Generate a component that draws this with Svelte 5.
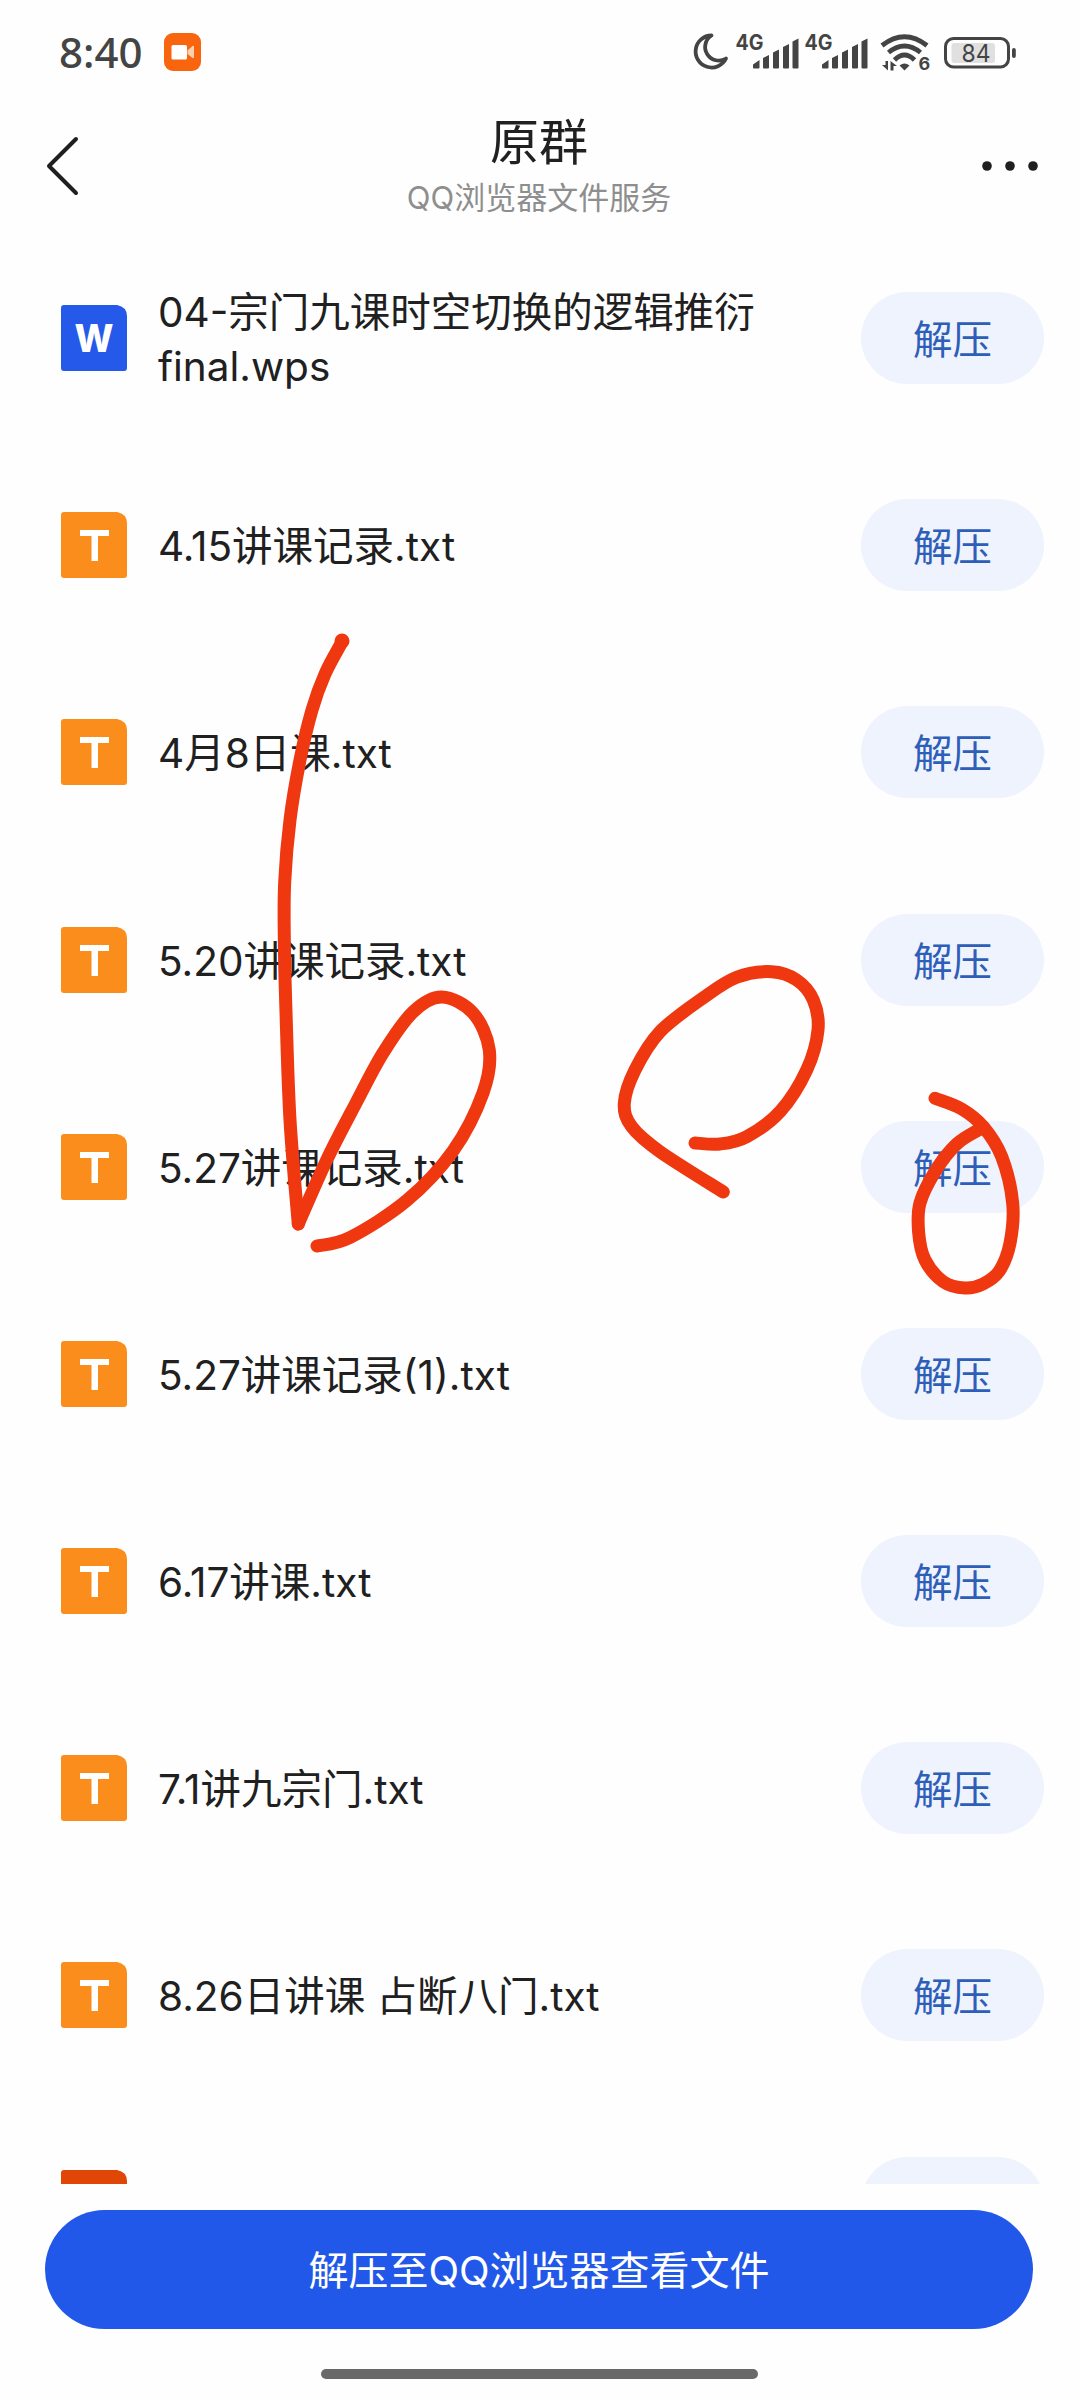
<script>
	const files = [
		{ name: '04-宗门九课时空切换的逻辑推衍final.wps', type: 'wps' },
		{ name: '4.15讲课记录.txt', type: 'txt' },
		{ name: '4月8日课.txt', type: 'txt' },
		{ name: '5.20讲课记录.txt', type: 'txt' },
		{ name: '5.27讲课记录.txt', type: 'txt' },
		{ name: '5.27讲课记录(1).txt', type: 'txt' },
		{ name: '6.17讲课.txt', type: 'txt' },
		{ name: '7.1讲九宗门.txt', type: 'txt' },
		{ name: '8.26日讲课 占断八门.txt', type: 'txt' },
		{ name: '', type: 'ppt' }
	];

	const colors = { wps: '#2459e9', txt: '#fa8d1c', ppt: '#e04605' };

	// Pen strokes drawn over the page, as lists of points
	const strokes = [
		[[342, 642], [325, 674], [312, 710], [300, 760], [290, 820], [284.7, 882], [284.3, 938], [286, 1012], [290, 1120], [298.3, 1224]],
		[[298.3, 1224], [326.7, 1160], [356, 1103], [383, 1053], [413, 1012], [441.7, 997], [473, 1013], [489.3, 1050], [483, 1093], [453, 1151], [406.7, 1200.6], [350, 1237.5], [317, 1246]],
		[[695, 1143], [720, 1144], [746.7, 1136.7], [780, 1111.7], [806.7, 1070], [818, 1030], [813.3, 1000], [796.7, 980], [771.7, 971.7], [736.7, 977.3], [703, 998], [660, 1031.7], [635, 1070], [624.3, 1103.3], [631.7, 1126.7], [660, 1151.7], [723.3, 1192]],
		[[935, 1098.3], [961.7, 1109], [983.3, 1126.7], [1001.7, 1156.7], [1012.7, 1203.3], [1010, 1243.3], [999.3, 1271], [983, 1284], [965, 1288], [943.3, 1281.7], [925, 1260], [918.7, 1233], [920, 1203], [936, 1170], [956.7, 1144], [978.3, 1130]]
	];

	function smooth(p) {
		let d = `M${p[0]}`;
		for (let i = 0; i < p.length - 1; i++) {
			const a = p[i - 1] || p[i];
			const b = p[i];
			const c = p[i + 1];
			const e = p[i + 2] || c;
			d += `C${b[0] + (c[0] - a[0]) / 6},${b[1] + (c[1] - a[1]) / 6} ${c[0] - (e[0] - b[0]) / 6},${c[1] - (e[1] - b[1]) / 6} ${c}`;
		}
		return d;
	}
</script>

<div class="page">
	<div class="status">
		<span class="time">8:40</span>
		<svg class="rec" width="37" height="38" viewBox="0 0 37 38">
			<rect width="37" height="38" rx="9" fill="#f9650f" />
			<rect x="7.5" y="12" width="15.5" height="14.5" rx="1.5" fill="#fff" />
			<path d="M23.5 17.5 28.5 13q1.5-.6 1.5 1v10q0 1.6-1.5 1L23.5 21z" fill="#ffd0ae" />
		</svg>

		<svg class="system" width="330" height="50" viewBox="0 -4 330 50" fill="#444">
			<path d="M19.5 4.5A16 16 0 1 0 34 27.500A13.5 13.5 0 0 1 19.5 4.5Z" fill="none" stroke="#444" stroke-width="3.8" stroke-linejoin="round" />
			{#each [0, 69] as x}
				<g transform="translate({x} 0)">
					<text x="43.5" y="19" font-size="21" font-weight="700" textLength="28" lengthAdjust="spacingAndGlyphs">4G</text>
					<path d="M61 33.5 67.5 29v7.5q0 1-1 1H62q-1 0-1-1z" />
					<path d="M71 27 77 24v12.5q0 1-1 1h-4q-1 0-1-1z" />
					<path d="M81 21.5 87 18.5v18q0 1-1 1h-4q-1 0-1-1z" />
					<path d="M91 16 97 13v23.5q0 1-1 1h-4q-1 0-1-1z" />
					<path d="M100.5 10.5 106.5 7.5v29q0 1-1 1h-4q-1 0-1-1z" />
				</g>
			{/each}
			<g fill="none" stroke="#444" stroke-width="4.8">
				<path d="M190 14.500Q212.5-3 235 14.500" />
				<path d="M196.5 21.500Q212.5 8.500 228.5 21.500" />
				<path d="M202.5 29Q212.5 19 222.5 29" />
			</g>
			<path d="M207.5 34.500q5-4 10 0l-5 5z" />
			<path d="M190 34h3.500v-4h2.500V39.500zM198.500 39.500V30l6.500 5h-3.500v4.500z" />
			<text x="226.5" y="38.500" font-size="18" font-weight="700">6</text>
			<rect x="253.5" y="7.5" width="63" height="28.5" rx="8" fill="none" stroke="#444" stroke-width="3" />
			<rect x="259.5" y="12" width="43.5" height="20" rx="3" fill="#e0e0e0" />
			<text x="269.5" y="30.5" font-size="24" textLength="29" lengthAdjust="spacingAndGlyphs">84</text>
			<rect x="320" y="17" width="3.8" height="10" rx="1.9" />
		</svg>
	</div>

	<div class="header">
		<svg class="back" width="34" height="60" viewBox="0 0 34 60">
			<path d="M31 3 4 30 31 57" fill="none" stroke="#1f1f1f" stroke-width="4" stroke-linecap="round" stroke-linejoin="round" />
		</svg>
		<div class="titles">
			<div class="title">原群</div>
			<div class="subtitle">QQ浏览器文件服务</div>
		</div>
		<svg class="more" width="56" height="12" viewBox="0 0 56 12" fill="#1f1f1f">
			<circle cx="5" cy="6" r="4.8" />
			<circle cx="28" cy="6" r="4.8" />
			<circle cx="51" cy="6" r="4.8" />
		</svg>
	</div>

	<div class="list">
		{#each files as file}
			<div class="row">
				<svg class="file-icon" width="66" height="66" viewBox="0 0 66 66">
					<path d="M3 0H56Q66 2 66 11V63Q66 66 63 66H3Q0 66 0 63V3Q0 0 3 0Z" fill={colors[file.type]} />
					{#if file.type === 'wps'}
						<text x="33" y="46.5" text-anchor="middle" font-size="38" font-weight="800" fill="#fff" textLength="39" lengthAdjust="spacingAndGlyphs">W</text>
					{:else if file.type === 'txt'}
						<path d="M19 18H48V24H37V49H30.500V24H19Z" fill="#fff" />
					{/if}
				</svg>
				<div class="name">{file.name}</div>
				<button class="extract">{file.name ? '解压' : ''}</button>
			</div>
		{/each}
	</div>

	<div class="footer">
		<button class="extract-all">解压至QQ浏览器查看文件</button>
		<div class="home"></div>
	</div>

	<svg class="ink" width="1080" height="2401" viewBox="0 0 1080 2401">
		{#each strokes as stroke}
			<path d={smooth(stroke)} />
		{/each}
		<circle cx="342" cy="641" r="7.5" />
	</svg>
</div>

<style>
	:global(body) {
		background: #fefefe;
	}
	.page {
		position: relative;
		width: 1080px;
		height: 2401px;
		overflow: hidden;
		display: flex;
		flex-direction: column;
		background: #fefefe;
		color: #202020;
		font-family: Inter, 'Noto Sans CJK SC', sans-serif;
	}
	button {
		border: none;
		padding: 0;
		font-family: inherit;
	}
	.status {
		display: flex;
		align-items: center;
		height: 104px;
		padding: 0 59px;
		box-sizing: border-box;
	}
	.time {
		width: 105px;
		padding-bottom: 2px;
		font-family: 'Noto Sans', sans-serif;
		font-size: 42px;
		font-weight: 500;
		color: #444;
	}
	.system {
		margin-left: auto;
		margin-right: -1px;
	}
	.header {
		display: flex;
		align-items: center;
		justify-content: space-between;
		height: 124px;
		padding: 0 42px 0 45px;
		margin-bottom: 6.4px;
	}
	.titles {
		text-align: center;
		padding-left: 17px;
	}
	.title {
		font-size: 49px;
		line-height: 64px;
	}
	.subtitle {
		font-size: 31px;
		line-height: 46px;
		color: #8e8e8e;
	}
	.list {
		height: 1950px;
		overflow: hidden;
	}
	.row {
		display: flex;
		align-items: center;
		height: 207.2px;
		padding: 0 36px 0 61px;
	}
	.file-icon {
		flex: none;
	}
	.name {
		width: 610px;
		margin-left: 31px;
		padding-top: 4px;
		font-size: 40.5px;
		line-height: 54px;
	}
	.extract {
		width: 183px;
		height: 92px;
		margin-left: auto;
		padding-bottom: 3px;
		border-radius: 46px;
		background: #eff3fe;
		color: #2e5fb8;
		font-size: 39.5px;
	}
	.footer {
		display: flex;
		flex-direction: column;
		align-items: center;
		padding: 25.6px 2px 0 0;
	}
	.extract-all {
		width: 988px;
		height: 119px;
		padding-bottom: 3px;
		border-radius: 60px;
		background: #2258e9;
		color: #fff;
		font-size: 40px;
	}
	.home {
		width: 437px;
		height: 10px;
		margin-top: 40px;
		border-radius: 5px;
		background: #696969;
	}
	.ink {
		position: absolute;
		top: 0;
		left: 0;
		fill: none;
		stroke: #ef3710;
		stroke-width: 13;
		stroke-linecap: round;
		stroke-linejoin: round;
		pointer-events: none;
	}
	.ink circle {
		fill: #ef3710;
		stroke: none;
	}
</style>
